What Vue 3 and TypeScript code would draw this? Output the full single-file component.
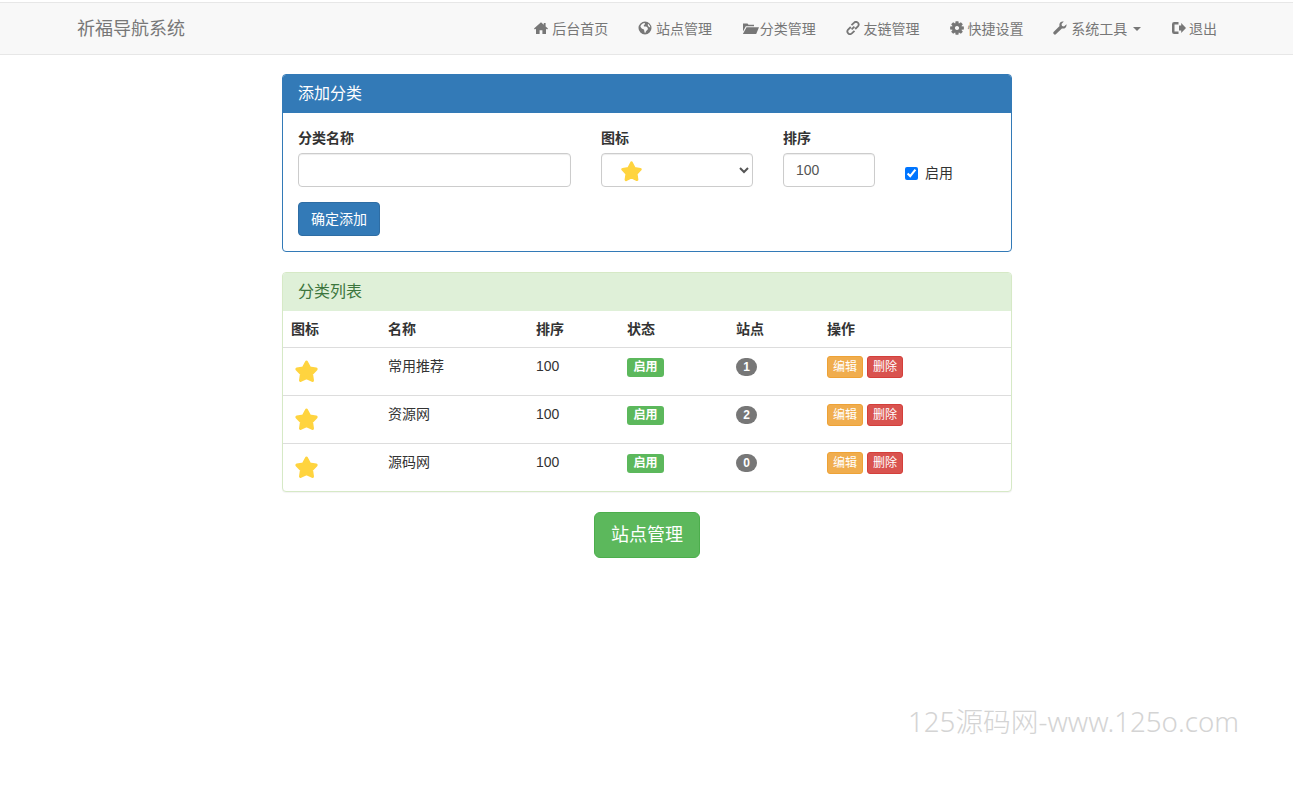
<script setup lang="ts">
interface NavItem {
  label: string;
  w: number;
  d?: string;
  line?: string;
  caret?: boolean;
}

// 8-tooth gear outline with a round hole
const gearPath = () => {
  const pts: string[] = [];
  for (let i = 0; i < 8; i++) {
    const a = (i * Math.PI) / 4;
    const corners: [number, number][] = [
      [4.9, a - 0.38],
      [7, a - 0.2],
      [7, a + 0.2],
      [4.9, a + 0.38],
    ];
    corners.forEach(([r, t]) => {
      pts.push(`${(7 + r * Math.cos(t)).toFixed(2)} ${(7 + r * Math.sin(t)).toFixed(2)}`);
    });
  }
  return `M${pts.join('L')}Z M7 4.9a2.1 2.1 0 1 0 .01 0Z`;
};

const navItems: NavItem[] = [
  { label: '后台首页', w: 14, d: 'M7 1.2 0 7.6l.9 1L2 7.7V13h3.6V9.2h2.8V13H12V7.7l1.1.9.9-1-2.4-2.2V2H9.8v1.8z' },
  { label: '站点管理', w: 14, d: 'M7 .5a6.5 6.5 0 1 0 0 13 6.5 6.5 0 0 0 0-13zM2.4 5.2C3 3.4 4.8 2 6.6 2c.8.6.2 1.6-.4 2-.9.5-.4 1.6.7 1.6 1.400 0 2.300.5 2.800 1.300.5.900-.1 2-1 2.700-.7.600-1 1.500-1.400 2.300-.8-.3-.9-1.200-1-2-.1-1.100-.6-1.500-1.500-1.800-.9-.3-1.700-1.200-2.400-2.900zM10 2.700c1.300.8 2.200 2.300 2.300 3.800-.9-.2-1.700-.8-2.200-1.600-.4-.7-.5-1.400-.1-2.200z' },
  { label: '分类管理', w: 17, d: 'M1 2.500h4.500l1 1.200H12v1.500H3.800L1 10.500zM4.500 6.200H17L14.200 13H.9z' },
  { label: '友链管理', w: 14, line: 'M5.500 4.200 8.200 1.600a2.620 2.620 0 0 1 3.700 3.700L9.200 8M8.500 9.800 5.800 12.400a2.620 2.620 0 0 1-3.700-3.700L4.800 6M5.600 8.400l2.800-2.800' },
  { label: '快捷设置', w: 14, d: gearPath() },
  { label: '系统工具', w: 14, caret: true, d: 'M13.500 3.200 11 5.500 9 5 8.500 3 10.800.6C8.800 0 6.600 1 6.400 3.400c-.1.600 0 1.200.2 1.700L.8 10.800a1.500 1.500 0 0 0 2.300 2.300L8.900 7.400c2.400.8 5.100-1.200 4.600-4.200z' },
  { label: '退出', w: 15, d: 'M8 4.500h2.200V2L15 7l-4.800 5V9.500H8zM7.500 1v2.500h-4v7h4V13H3.200A2.200 2.200 0 0 1 1 10.800V3.200A2.200 2.200 0 0 1 3.200 1z' },
];

const categories = [
  { name: '常用推荐', sort: 100, sites: 1 },
  { name: '资源网', sort: 100, sites: 2 },
  { name: '源码网', sort: 100, sites: 0 },
];

const starPoints = '12,3 15,8.700 21.200,9.700 16.800,14.300 17.700,20.500 12,17.800 6.300,20.500 7.200,14.300 2.800,9.700 9,8.700';
</script>

<template>
  <div class="page">
    <nav class="navbar">
      <div class="navbar-inner">
        <a class="brand">祈福导航系统</a>
        <ul class="nav">
          <li v-for="item in navItems" :key="item.label" class="nav-link">
            <span class="ico">
              <svg :width="item.w" height="14" :viewBox="`0 0 ${item.w} 14`">
                <path v-if="item.d" :d="item.d" fill="currentColor" fill-rule="evenodd" />
                <path v-if="item.line" :d="item.line" fill="none" stroke="currentColor" stroke-width="1.800" />
              </svg>
            </span>
            {{ item.label }}
            <span v-if="item.caret" class="caret"></span>
          </li>
        </ul>
      </div>
    </nav>

    <main class="content">
      <section class="panel panel-primary">
        <h3 class="panel-heading">添加分类</h3>
        <form class="panel-body" @submit.prevent>
          <div class="form-row">
            <div class="field">
              <label>分类名称</label>
              <input class="form-control" type="text" />
            </div>
            <div class="field">
              <label>图标</label>
              <div class="select-wrap">
                <select class="form-control"><option></option></select>
                <svg class="select-star" width="23" height="23" viewBox="0 0 24 24">
                  <polygon :points="starPoints" class="star" />
                </svg>
              </div>
            </div>
            <div class="field">
              <label>排序</label>
              <input class="form-control sort-input" type="text" value="100" />
            </div>
            <label class="check">
              <input type="checkbox" checked />
              <span>启用</span>
            </label>
          </div>
          <button class="btn btn-primary">确定添加</button>
        </form>
      </section>

      <section class="panel panel-success">
        <h3 class="panel-heading">分类列表</h3>
        <table class="table">
          <colgroup>
            <col style="width: 97px" />
            <col style="width: 148px" />
            <col style="width: 91px" />
            <col style="width: 109px" />
            <col style="width: 91px" />
            <col />
          </colgroup>
          <thead>
            <tr>
              <th>图标</th>
              <th>名称</th>
              <th>排序</th>
              <th>状态</th>
              <th>站点</th>
              <th>操作</th>
            </tr>
          </thead>
          <tbody>
            <tr v-for="cat in categories" :key="cat.name">
              <td>
                <svg class="row-star" width="25" height="25" viewBox="0 0 24 24">
                  <polygon :points="starPoints" class="star" />
                </svg>
              </td>
              <td>{{ cat.name }}</td>
              <td>{{ cat.sort }}</td>
              <td><span class="label">启用</span></td>
              <td><span class="badge">{{ cat.sites }}</span></td>
              <td class="ops">
                <button class="btn-xs warning">编辑</button>
                <button class="btn-xs danger">删除</button>
              </td>
            </tr>
          </tbody>
        </table>
      </section>

      <div class="bottom">
        <a class="btn-lg">站点管理</a>
      </div>
    </main>

    <div class="watermark">125源码网-www.125o.com</div>
  </div>
</template>

<style>
html,
body {
  margin: 0;
  background: #fff;
}
</style>

<style scoped>
.page {
  position: relative;
  min-height: 787px;
  overflow: hidden;
  font-family: "Liberation Sans", "Noto Sans CJK SC", sans-serif;
  font-size: 14px;
  line-height: 20px;
  color: #333;
}

.navbar {
  margin-top: 2px;
  height: 53px;
  box-sizing: border-box;
  background: #f8f8f8;
  border-top: 1px solid #e7e7e7;
  border-bottom: 1px solid #e7e7e7;
}

.navbar-inner {
  width: 1170px;
  height: 100%;
  margin: 0 0 0 62px;
  display: flex;
  align-items: center;
  justify-content: space-between;
}

.brand {
  padding: 0 15px;
  font-size: 18px;
  color: #777;
}

.nav {
  display: flex;
  margin: 0;
  padding: 0;
  list-style: none;
}

.nav-link {
  display: flex;
  align-items: center;
  padding: 0 15px;
  color: #777;
  white-space: nowrap;
}

.ico {
  display: inline-flex;
  width: 17.800px;
  margin-top: -1px;
}

.caret {
  width: 0;
  height: 0;
  margin-left: 6px;
  border-top: 4px solid #777;
  border-left: 4px solid transparent;
  border-right: 4px solid transparent;
}

.content {
  width: 730px;
  margin: 19px 0 0 282px;
}

.panel {
  margin-bottom: 20px;
  border: 1px solid;
  border-radius: 4px;
  background: #fff;
  overflow: hidden;
}

.panel-primary {
  border-color: #337ab7;
}

.panel-success {
  border-color: #d6e9c6;
  box-shadow: 0 1px 1px rgba(0, 0, 0, 0.05);
}

.panel-heading {
  margin: 0;
  padding: 10px 15px;
  height: 38px;
  box-sizing: border-box;
  font-size: 16px;
  font-weight: 400;
  line-height: 18px;
}

.panel-primary .panel-heading {
  background: #337ab7;
  color: #fff;
}

.panel-success .panel-heading {
  background: #dff0d8;
  color: #3c763d;
}

.panel-body {
  padding: 15px;
}

.form-row {
  display: grid;
  grid-template-columns: 273px 152px 92px auto;
  column-gap: 30px;
  margin-bottom: 15px;
}

.field label {
  display: block;
  margin-bottom: 5px;
  font-weight: 700;
}

.form-control {
  display: block;
  width: 100%;
  height: 34px;
  box-sizing: border-box;
  padding: 6px 12px;
  font: inherit;
  color: #555;
  background: #fff;
  border: 1px solid #ccc;
  border-radius: 4px;
  box-shadow: inset 0 1px 1px rgba(0, 0, 0, 0.075);
}

.select-wrap {
  position: relative;
}

.select-star {
  position: absolute;
  left: 19px;
  top: 7px;
}

.star {
  fill: #ffd43f;
  stroke: #ffd43f;
  stroke-width: 3;
  stroke-linejoin: round;
}

.check {
  display: flex;
  align-items: center;
  align-self: start;
  margin-top: 35px;
  gap: 7px;
  color: #333;
}

.check input {
  width: 13px;
  height: 13px;
  margin: 0;
}

.btn {
  display: block;
  padding: 6px 12px;
  font: inherit;
  font-size: 14px;
  color: #fff;
  border: 1px solid #2e6da4;
  border-radius: 4px;
}

.btn-primary {
  background: #337ab7;
}

.table {
  width: 100%;
  table-layout: fixed;
  border-collapse: separate;
  border-spacing: 0;
}

.table th {
  height: 36px;
  padding: 8px;
  box-sizing: border-box;
  text-align: left;
  font-weight: 700;
}

.table td {
  height: 48px;
  padding: 8px;
  box-sizing: border-box;
  vertical-align: top;
  border-top: 1px solid #ddd;
}

.row-star {
  display: block;
  margin: 3px 0 0 3px;
}

.label {
  display: inline-block;
  margin-top: 1px;
  padding: 0 6.500px;
  height: 19px;
  font-size: 12px;
  font-weight: 700;
  line-height: 19px;
  color: #fff;
  background: #5cb85c;
  border-radius: 3px;
}

.badge {
  display: inline-block;
  margin-top: 1px;
  padding: 0 7.250px;
  height: 18px;
  font-size: 12px;
  font-weight: 700;
  line-height: 18px;
  color: #fff;
  background: #777;
  border-radius: 10px;
}

.ops {
  white-space: nowrap;
}

.btn-xs {
  padding: 1px 5px;
  height: 22px;
  box-sizing: border-box;
  margin-right: 4px;
  font-family: inherit;
  font-size: 12px;
  line-height: 18px;
  color: #fff;
  border: 1px solid;
  border-radius: 3px;
  vertical-align: top;
}

.warning {
  background: #f0ad4e;
  border-color: #eea236;
}

.danger {
  background: #d9534f;
  border-color: #d43f3a;
}

.bottom {
  text-align: center;
}

.btn-lg {
  display: inline-block;
  padding: 10px 16px;
  font-size: 18px;
  line-height: 24px;
  color: #fff;
  background: #5cb85c;
  border: 1px solid #4cae4c;
  border-radius: 6px;
}

.watermark {
  position: absolute;
  left: 908px;
  top: 702px;
  font-size: 27.700px;
  line-height: 38px;
  color: #d4d4d4;
  white-space: nowrap;
  font-family: "Noto Sans", "Noto Sans CJK SC", sans-serif;
  font-weight: 300;
}
</style>
